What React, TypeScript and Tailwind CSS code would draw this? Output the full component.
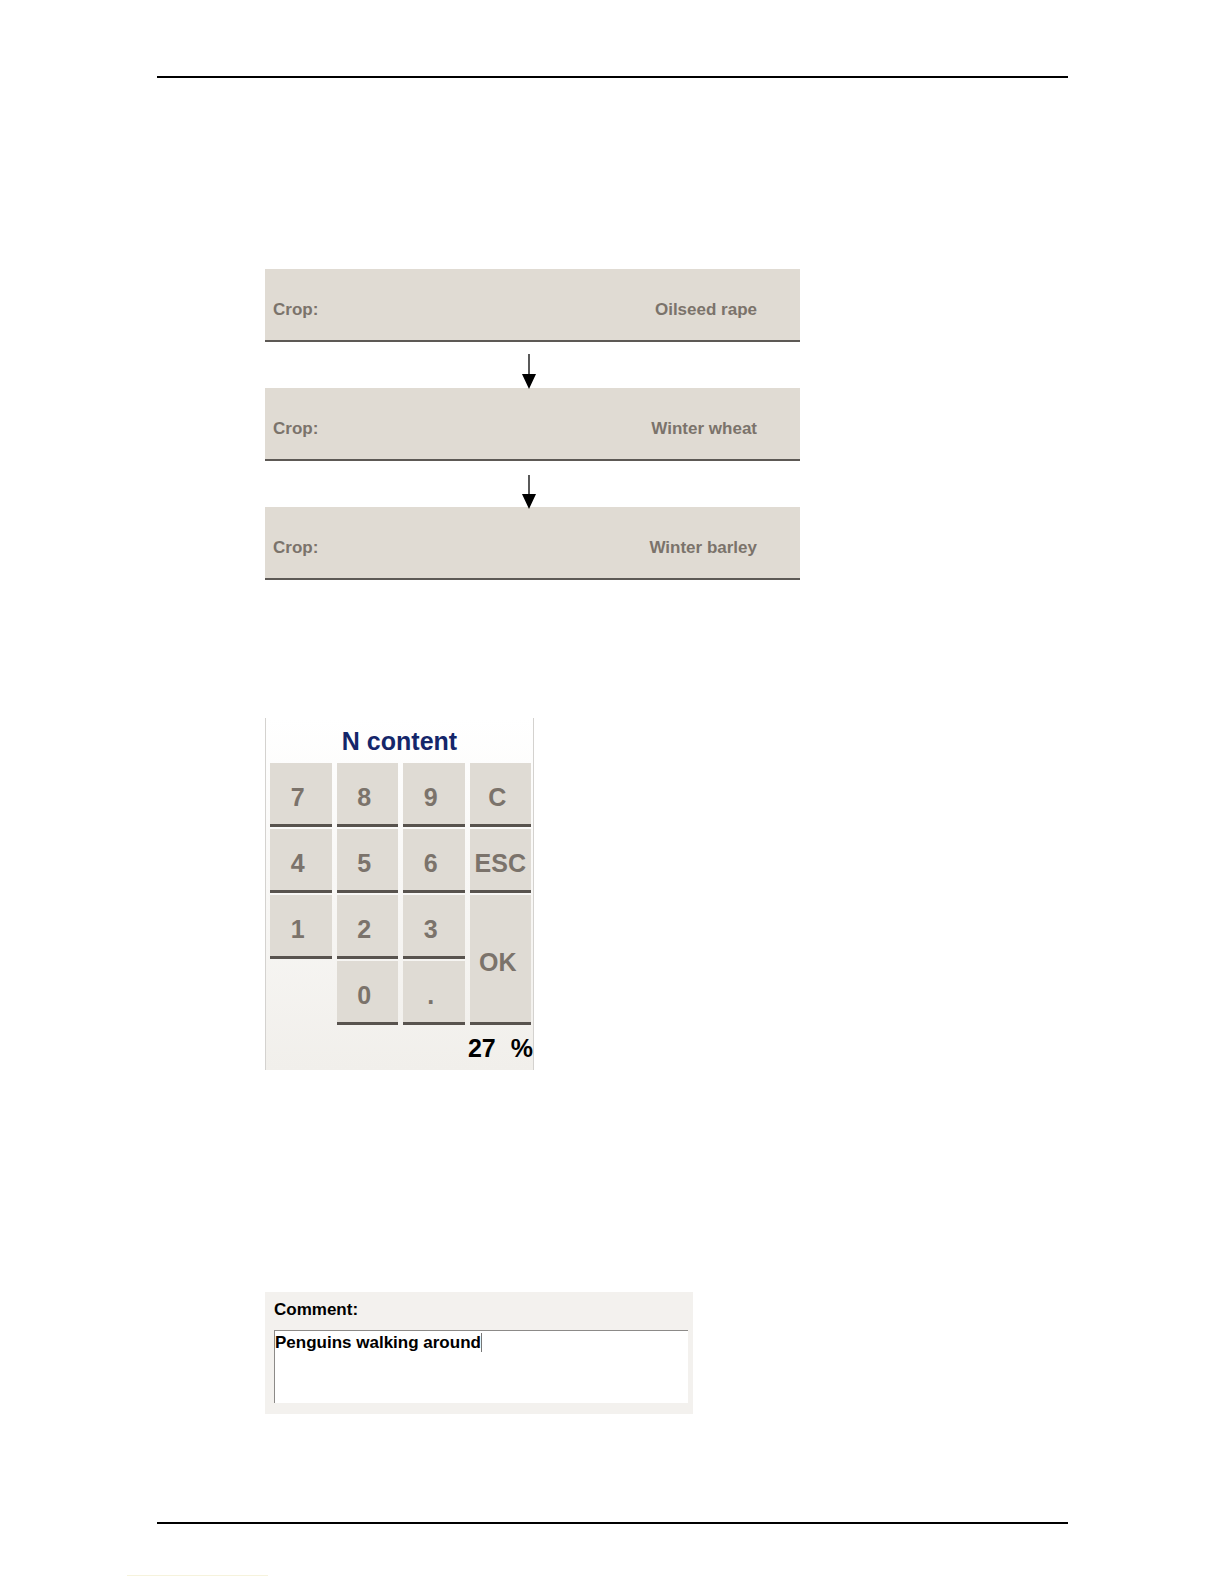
import React from 'react'

const font = { fontFamily: '"Liberation Sans", Arial, sans-serif' }

function CropRow({ value }: { value: string }) {
  return (
    <div className="flex h-[73px] w-[535px] items-center justify-between border-b-2 border-[#5d5955] bg-[#e0dbd3] pl-[8px] pr-[43px] pt-[10px] text-[17px] font-bold text-[#7b736b]">
      <span>Crop:</span>
      <span>{value}</span>
    </div>
  )
}

function Arrow({ top, len }: { top: number; len: number }) {
  return (
    <div className="relative h-[46px] w-[535px]">
      <svg
        className="absolute left-[256px]"
        style={{ top }}
        width="16"
        height={len}
        viewBox={`0 0 16 ${len}`}
      >
        <line x1="8" y1="0" x2="8" y2={len - 12} stroke="#000" strokeWidth="1.3" />
        <polygon points={`1,${len - 15} 15,${len - 15} 8,${len}`} fill="#000" />
      </svg>
    </div>
  )
}

function Key({ label, className = 'pr-[6px]' }: { label: string; className?: string }) {
  return (
    <div
      className={`flex items-center justify-center border-b-[3px] border-[#58534e] bg-[#dfdbd4] pt-[8px] text-[25px] font-bold text-[#7b736b] ${className}`}
    >
      {label}
    </div>
  )
}

function Keypad() {
  return (
    <div className="flex h-[352px] w-[269px] flex-col border-x border-[#d4d2cf] bg-gradient-to-b from-white to-[#f1efeb]">
      <div className="flex h-[45px] items-center justify-center pt-[2px] text-[25px] font-bold text-[#14266a]">
        N content
      </div>
      <div className="ml-[4px] grid w-[262px] grid-cols-[61.5px_61.5px_61.5px_61.5px] grid-rows-[64px_64px_64px_64px] gap-x-[5px] gap-y-[2px]">
        <Key label="7" />
        <Key label="8" />
        <Key label="9" />
        <Key label="C" />
        <Key label="4" />
        <Key label="5" />
        <Key label="6" />
        <Key label="ESC" className="pr-0" />
        <Key label="1" />
        <Key label="2" />
        <Key label="3" />
        <Key label="OK" className="row-span-2 pr-[5px]" />
        <div />
        <Key label="0" />
        <Key label="." />
      </div>
      <div className="flex flex-1 items-center justify-end gap-[15px] pt-[2px] text-[25px] font-bold text-black">
        <span>27</span>
        <span>%</span>
      </div>
    </div>
  )
}

function Comment() {
  return (
    <div className="flex h-[122px] w-[428px] flex-col bg-[#f3f1ee] pl-[9px] pr-[5px]">
      <div className="pt-[8px] text-[17px] font-bold leading-[20px] text-black">Comment:</div>
      <div className="mt-[10px] h-[73px] border-l border-t border-[#8c8a88] bg-white">
        <span className="border-r border-[#777] text-[17px] font-bold leading-[22px] text-black">
          Penguins walking around
        </span>
      </div>
    </div>
  )
}

export default function App() {
  return (
    <div className="flex h-[1584px] w-[1224px] flex-col bg-white" style={font}>
      <div className="ml-[157px] mt-[76px] h-[2px] w-[911px] bg-black" />
      <div className="ml-[265px] mt-[191px] flex flex-col">
        <CropRow value="Oilseed rape" />
        <Arrow top={12} len={35} />
        <CropRow value="Winter wheat" />
        <Arrow top={14} len={34} />
        <CropRow value="Winter barley" />
      </div>
      <div className="ml-[265px] mt-[138px]">
        <Keypad />
      </div>
      <div className="ml-[265px] mt-[222px]">
        <Comment />
      </div>
      <div className="ml-[157px] mt-[108px] h-[2px] w-[911px] bg-black" />
      <div className="ml-[127px] mt-[51px] h-[1px] w-[141px] bg-[#f6f3dc]" />
    </div>
  )
}
